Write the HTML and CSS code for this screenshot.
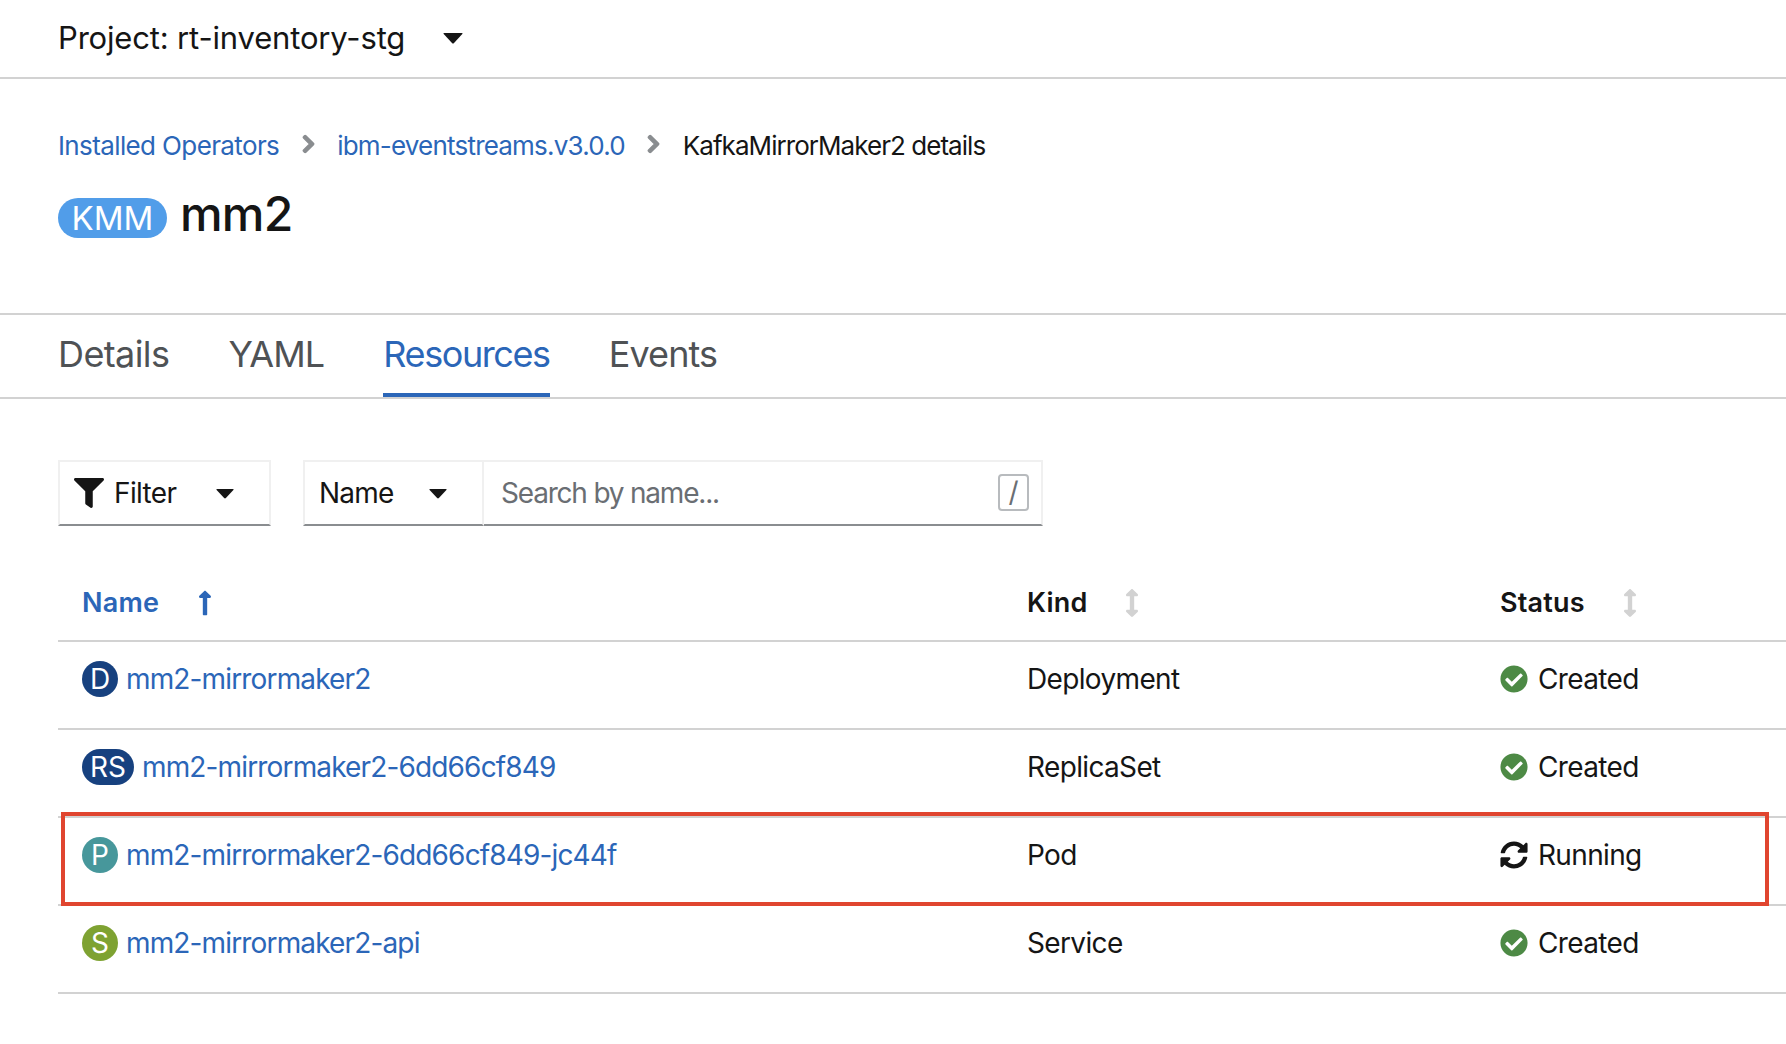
FILE: index.html
```html
<!DOCTYPE html>
<html lang="en">
<head>
<meta charset="utf-8">
<title>mm2 - KafkaMirrorMaker2 details</title>
<link rel="stylesheet" href="styles.css">
</head>
<body>
<svg class="defs" aria-hidden="true">
  <symbol id="i-caret" viewBox="0 0 20 12"><path d="M1 1h18q1 0 .3 1L11 11q-1 1-2 0L.7 2Q0 1 1 1z"/></symbol>
  <symbol id="i-chev" viewBox="0 0 320 512"><path d="M285.476 272.971L91.132 467.314c-9.373 9.373-24.569 9.373-33.941 0l-22.667-22.667c-9.357-9.357-9.375-24.522-.04-33.901L188.505 256 34.484 101.255c-9.335-9.379-9.317-24.544.04-33.901l22.667-22.667c9.373-9.373 24.569-9.373 33.941 0L285.475 239.03c9.373 9.372 9.373 24.568.001 33.941z"/></symbol>
  <symbol id="i-filter" viewBox="0 0 512 512"><path d="M487.976 0H24.028C2.71 0-8.047 25.866 7.058 40.971L192 225.941V432c0 7.831 3.821 15.17 10.237 19.662l80 55.98C298.02 518.69 320 507.493 320 487.98V225.941l184.947-184.97C520.021 25.896 509.338 0 487.976 0z"/></symbol>
  <symbol id="i-up" viewBox="0 0 256 512"><path d="M88 166.059V468c0 6.627 5.373 12 12 12h56c6.627 0 12-5.373 12-12V166.059h46.059c21.382 0 32.09-25.851 16.971-40.971l-86.059-86.059c-9.373-9.373-24.569-9.373-33.941 0l-86.059 86.059c-15.119 15.119-4.411 40.971 16.971 40.971H88z"/></symbol>
  <symbol id="i-sort" viewBox="0 0 256 512"><path d="M214.059 377.941H168V134.059h46.059c21.382 0 32.09-25.851 16.971-40.971L144.971 7.029c-9.373-9.373-24.569-9.373-33.941 0L24.971 93.088c-15.119 15.119-4.411 40.971 16.971 40.971H88v243.882H41.941c-21.382 0-32.09 25.851-16.971 40.971l86.059 86.059c9.373 9.373 24.569 9.373 33.941 0l86.059-86.059c15.12-15.119 4.412-40.971-16.97-40.971z"/></symbol>
  <symbol id="i-check" viewBox="0 0 512 512"><path d="M504 256c0 136.967-111.033 248-248 248S8 392.967 8 256 119.033 8 256 8s248 111.033 248 248zM227.314 387.314l184-184c6.248-6.248 6.248-16.379 0-22.627l-22.627-22.627c-6.248-6.249-16.379-6.249-22.628 0L216 308.118l-70.059-70.059c-6.248-6.248-16.379-6.248-22.628 0l-22.627 22.627c-6.248 6.248-6.248 16.379 0 22.627l104 104c6.249 6.249 16.379 6.249 22.628.001z"/></symbol>
  <symbol id="i-sync" viewBox="0 0 512 512"><path d="M370.72 133.28C339.458 104.008 298.888 87.962 255.848 88c-77.458.068-144.328 53.178-162.791 126.85-1.344 5.363-6.122 9.15-11.651 9.15H24.103c-7.498 0-13.194-6.807-11.807-14.176C33.933 94.924 134.813 8 256 8c66.448 0 126.791 26.136 171.315 68.685L463.03 40.97C478.149 25.851 504 36.559 504 57.941V192c0 13.255-10.745 24-24 24H345.941c-21.382 0-32.09-25.851-16.971-40.971l41.75-41.749zM32 296h134.059c21.382 0 32.09 25.851 16.971 40.971l-41.75 41.75c31.262 29.273 71.835 45.319 114.876 45.28 77.418-.07 144.315-53.144 162.787-126.849 1.344-5.363 6.122-9.15 11.651-9.15h57.304c7.498 0 13.194 6.807 11.807 14.176C478.067 417.076 377.187 504 256 504c-66.448 0-126.791-26.136-171.315-68.685L48.97 471.03C33.851 486.149 8 475.441 8 454.059V320c0-13.255 10.745-24 24-24z"/></symbol>
</svg>

<div class="page">
  <header class="project-bar">
    <span class="project-name">Project: rt-inventory-stg</span>
    <svg class="caret caret-lg"><use href="#i-caret"/></svg>
  </header>

  <section class="heading">
    <nav class="crumbs">
      <a class="link crumb-first">Installed Operators</a>
      <svg class="chev"><use href="#i-chev"/></svg>
      <a class="link">ibm-eventstreams.v3.0.0</a>
      <svg class="chev"><use href="#i-chev"/></svg>
      <span class="crumb-last">KafkaMirrorMaker2 details</span>
    </nav>
    <div class="title-row">
      <span class="pill">KMM</span>
      <h1 class="title">mm2</h1>
    </div>
  </section>

  <nav class="tabs">
    <a class="tab tab-first">Details</a>
    <a class="tab">YAML</a>
    <a class="tab tab-active">Resources</a>
    <a class="tab">Events</a>
  </nav>

  <section class="content">
    <div class="toolbar">
      <div class="ctl ctl-filter">
        <svg class="filter-icon"><use href="#i-filter"/></svg>
        <span class="filter-label">Filter</span>
        <svg class="caret"><use href="#i-caret"/></svg>
      </div>
      <div class="search-group">
        <div class="ctl ctl-name">
          <span>Name</span>
          <svg class="caret"><use href="#i-caret"/></svg>
        </div>
        <div class="ctl ctl-search">
          <span class="placeholder">Search by name...</span>
          <span class="kbd">/</span>
        </div>
      </div>
    </div>

    <div class="table">
      <div class="row row-head">
        <div class="cell th th-active">Name <svg class="sort sort-up"><use href="#i-up"/></svg></div>
        <div class="cell th">Kind <svg class="sort"><use href="#i-sort"/></svg></div>
        <div class="cell th">Status <svg class="sort"><use href="#i-sort"/></svg></div>
      </div>
      <div class="row">
        <div class="cell"><span class="badge badge-dark">D</span><a class="link">mm2-mirrormaker2</a></div>
        <div class="cell">Deployment</div>
        <div class="cell"><svg class="status status-ok"><use href="#i-check"/></svg>Created</div>
      </div>
      <div class="row">
        <div class="cell"><span class="badge badge-dark badge-wide">RS</span><a class="link">mm2-mirrormaker2-6dd66cf849</a></div>
        <div class="cell">ReplicaSet</div>
        <div class="cell"><svg class="status status-ok"><use href="#i-check"/></svg>Created</div>
      </div>
      <div class="row">
        <div class="cell"><span class="badge badge-teal">P</span><a class="link">mm2-mirrormaker2-6dd66cf849-jc44f</a></div>
        <div class="cell">Pod</div>
        <div class="cell"><svg class="status"><use href="#i-sync"/></svg>Running</div>
      </div>
      <div class="row">
        <div class="cell"><span class="badge badge-green">S</span><a class="link">mm2-mirrormaker2-api</a></div>
        <div class="cell">Service</div>
        <div class="cell"><svg class="status status-ok"><use href="#i-check"/></svg>Created</div>
      </div>
    </div>
  </section>

  <div class="highlight"></div>
</div>
</body>
</html>
```

FILE: styles.css
```css
* { box-sizing: border-box; }
html, body { margin: 0; padding: 0; background: #fff; }
body {
  font-family: Inter, "Noto Sans", "Liberation Sans", sans-serif;
  font-size: 28px;
  letter-spacing: -0.65px;
  color: #151515;
  overflow: hidden;
}
.defs { position: absolute; width: 0; height: 0; }
.page { position: relative; width: 1786px; height: 1044px; }
.link { color: #2b66b8; text-decoration: none; }
.cell .link { letter-spacing: -0.85px; }

.project-bar {
  height: 79px;
  padding: 0 0 2px 58px;
  display: flex;
  align-items: center;
  gap: 38px;
  border-bottom: 2px solid #d2d2d2;
  font-size: 31px;
  letter-spacing: -0.17px;
}
.caret { width: 18px; height: 11px; fill: #151515; flex: none; }
.caret-lg { width: 20px; height: 12px; }

.heading {
  height: 236px;
  padding: 50px 0 0 58px;
  border-bottom: 2px solid #d2d2d2;
}
.crumbs {
  display: flex;
  align-items: center;
  gap: 22.5px;
  height: 32px;
  font-size: 26px;
  letter-spacing: -0.8px;
}
.crumb-first { letter-spacing: -0.62px; }
.crumb-last { letter-spacing: -0.95px; }
.chev { width: 13px; height: 20px; fill: #8a8d90; stroke: #8a8d90; stroke-width: 36px; margin-bottom: 2px; }
.title-row {
  display: flex;
  align-items: center;
  gap: 13px;
  margin-top: 28px;
}
.pill {
  width: 109px;
  height: 40px;
  margin-top: 8px;
  border-radius: 20px;
  background: #519de9;
  color: #fff;
  font-size: 33px;
  letter-spacing: 0;
  display: flex;
  align-items: center;
  justify-content: center;
}
.title { margin: 0; font-size: 48px; font-weight: 500; line-height: 50px; letter-spacing: -0.8px; }

.tabs {
  height: 84px;
  padding-left: 58px;
  display: flex;
  gap: 59px;
  border-bottom: 2px solid #d2d2d2;
  letter-spacing: -0.9px;
}
.tab {
  display: flex;
  align-items: center;
  padding-bottom: 4px;
  font-size: 36px;
  color: #4f5255;
}
.tab-first { letter-spacing: -0.6px; }
.tab-active { color: #2b66b8; border-bottom: 4px solid #2b66b8; padding-bottom: 0; height: 82px; letter-spacing: -1.4px; }

.content { padding: 61px 0 0 58px; }
.toolbar { display: flex; gap: 32px; height: 66px; }
.search-group { display: flex; }
.ctl {
  display: flex;
  align-items: center;
  height: 66px;
  border: 2px solid #f0f0f0;
  border-bottom-color: #8a8d90;
}
.ctl-filter { width: 213px; padding-left: 14px; }
.filter-icon { width: 30px; height: 30px; fill: #151515; }
.filter-label { margin-left: 10px; width: 102px; }
.ctl-name { width: 181px; padding-left: 14px; justify-content: space-between; padding-right: 35px; letter-spacing: -0.8px; }
.ctl-search { width: 559px; border-left: 0; padding: 0 12px 0 17px; justify-content: space-between; }
.placeholder { color: #6a6e73; letter-spacing: -1.2px; }
.kbd {
  width: 31px;
  height: 37px;
  margin-bottom: 2px;
  border: 2px solid #b8bbbe;
  border-radius: 4px;
  display: flex;
  align-items: center;
  justify-content: center;
  color: #6a6e73;
  font-size: 28px;
  letter-spacing: 0;
}

.table { margin-top: 39px; }
.row {
  display: grid;
  grid-template-columns: 945px 473px 1fr;
  height: 88px;
  border-bottom: 2px solid #d2d2d2;
}
.row-head { height: 77px; }
.cell { display: flex; align-items: center; padding: 0 0 12px 24px; }
.th { font-weight: 600; font-size: 27px; letter-spacing: 0.2px; padding-bottom: 0; }
.th-active { color: #2b66b8; }
.sort { width: 14px; height: 28px; margin-left: 38px; fill: #d2d2d2; }
.sort-up { fill: #2b66b8; margin-left: 39px; }
.badge {
  flex: none;
  width: 36px;
  height: 36px;
  margin-right: 8px;
  border-radius: 18px;
  color: #fff;
  letter-spacing: 0;
  display: flex;
  align-items: center;
  justify-content: center;
}
.badge-wide { width: 52px; }
.badge-dark { background: #17417f; }
.badge-teal { background: #47979b; }
.badge-green { background: #7ea232; }
.status { width: 28px; height: 28px; margin-right: 10px; fill: #151515; flex: none; }
.status-ok { fill: #4d8a45; }

.highlight {
  position: absolute;
  left: 61px;
  top: 812px;
  width: 1708px;
  height: 94px;
  border: 4px solid #e0452f;
}
```
